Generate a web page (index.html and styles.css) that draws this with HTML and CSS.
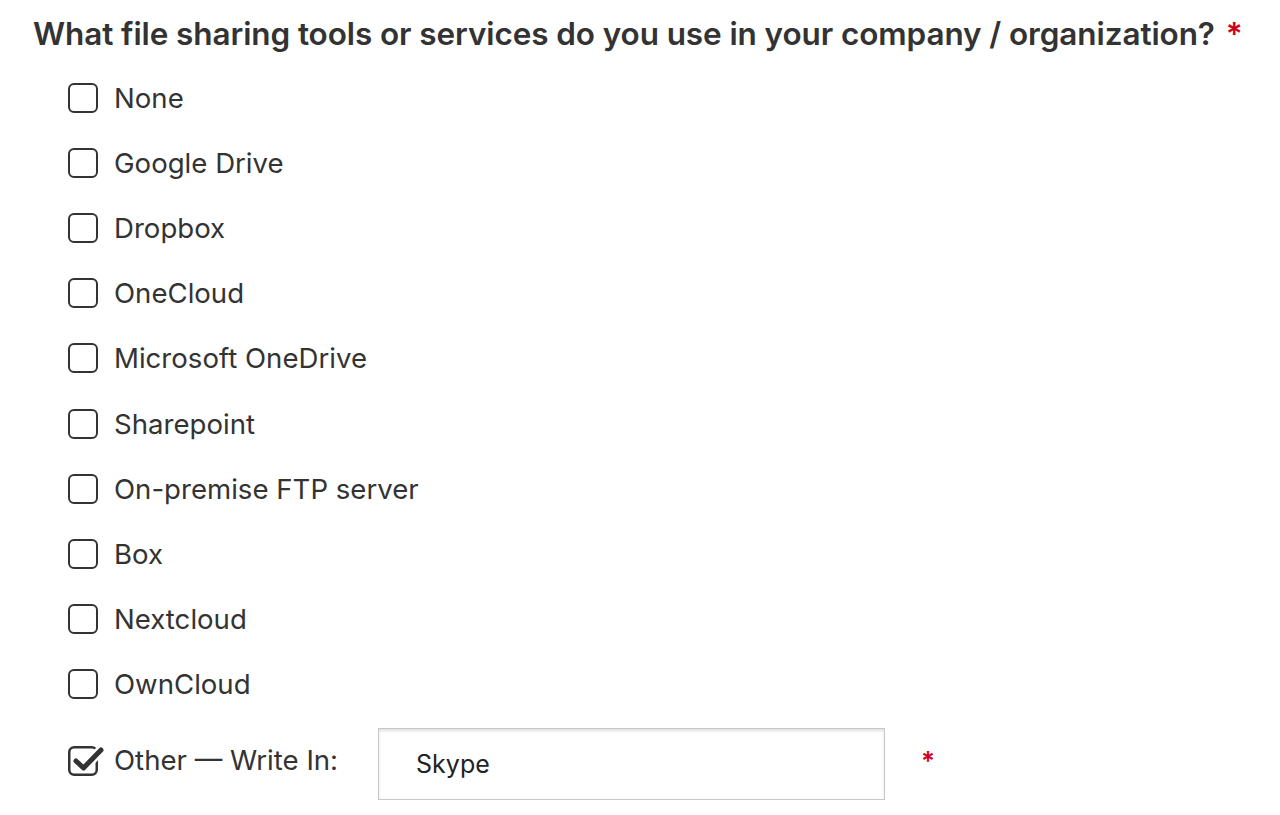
FILE: index.html
```html
<!DOCTYPE html>
<html>
<head>
<meta charset="utf-8">
<link rel="stylesheet" href="styles.css">
</head>
<body>
<div class="question">
  <h1 class="title">What file sharing tools or services do you use in your company / organization? <span class="req">*</span></h1>
  <ul class="options">
    <li class="opt"><span class="box"></span><span class="label">None</span></li>
    <li class="opt"><span class="box"></span><span class="label">Google Drive</span></li>
    <li class="opt"><span class="box"></span><span class="label">Dropbox</span></li>
    <li class="opt"><span class="box"></span><span class="label">OneCloud</span></li>
    <li class="opt"><span class="box"></span><span class="label">Microsoft OneDrive</span></li>
    <li class="opt"><span class="box"></span><span class="label">Sharepoint</span></li>
    <li class="opt"><span class="box"></span><span class="label">On-premise FTP server</span></li>
    <li class="opt"><span class="box"></span><span class="label">Box</span></li>
    <li class="opt"><span class="box"></span><span class="label">Nextcloud</span></li>
    <li class="opt"><span class="box"></span><span class="label">OwnCloud</span></li>
    <li class="opt other">
      <svg class="checkbox" viewBox="0 0 30 30" width="30" height="30">
        <rect x="1.25" y="1.25" width="27.5" height="27.5" rx="5" ry="5" fill="none" stroke="#333" stroke-width="2.5"/>
        <path d="M8 15 L15.5 22 L33 4" fill="none" stroke="#fff" stroke-width="10" stroke-linecap="round" stroke-linejoin="round"/>
        <path d="M8 15 L15.5 22 L33 4" fill="none" stroke="#333" stroke-width="5" stroke-linecap="round" stroke-linejoin="round"/>
      </svg>
      <span class="label other-label">Other — Write In:</span>
      <div class="write"><span class="write-text">Skype</span></div>
      <span class="req small">*</span>
    </li>
  </ul>
</div>
</body>
</html>
```
FILE: styles.css
```css
html, body { margin: 0; padding: 0; background: #fff; }
body { font-family: Inter, "Noto Sans", sans-serif; color: #333; width: 1280px; height: 815px; overflow: hidden; }
.question { padding: 14px 0 0 33px; }
.title { margin: 0; font-size: 31.5px; font-weight: 600; line-height: 40px; color: #333; letter-spacing: -0.1px; }
.req { color: #d0021b; font-weight: 600; margin-left: 3px; }
.options { list-style: none; margin: 0; padding: 11px 0 0 35px; }
.opt { display: flex; align-items: center; height: 65.2px; }
.box { width: 30px; height: 30px; box-sizing: border-box; border: 2.5px solid #333; border-radius: 6px; flex: none; }
.checkbox { flex: none; overflow: visible; margin-bottom: 6px; }
.label { font-size: 27.6px; margin-left: 16px; color: #333; }
.other-label { margin-bottom: 7px; }
.other { height: 72px; margin-top: 11px; }
.write { margin-left: 40px; width: 505px; height: 70px; border: 1px solid #c8c8c8; box-shadow: inset 0 2px 3px rgba(0,0,0,0.12); display: flex; align-items: center; flex: none; }
.write-text { font-size: 25px; margin-left: 37px; color: #222; }
.req.small { font-size: 26px; margin-left: 36px; margin-top: -6px; }
```
